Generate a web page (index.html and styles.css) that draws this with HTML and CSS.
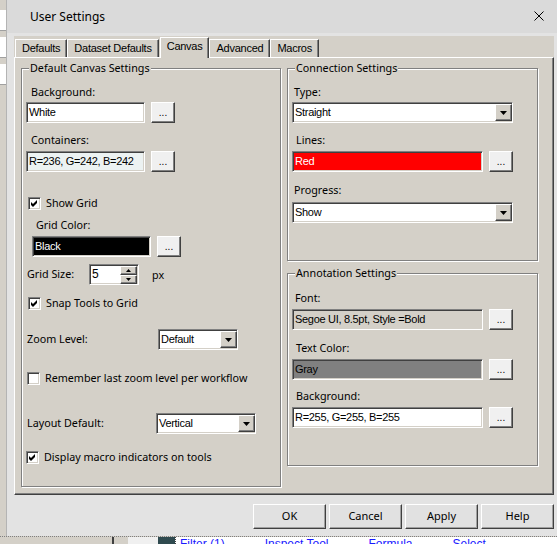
FILE: index.html
```html
<!DOCTYPE html>
<html lang="en">
<head>
  <meta charset="UTF-8" />
  <title>User Settings</title>
  <link rel="stylesheet" href="styles.css">
</head>
<body>
  <div class="desk">
    <div class="desk-left">
      <div class="slot"></div>
      <div class="slot"></div>
      <div class="slot"></div>
    </div>

    <div class="window" role="dialog" aria-label="User Settings">
      <div class="titlebar">
        <span>User Settings</span>
        <svg class="close" width="10" height="10" viewBox="0 0 10 10"><path d="M0.5 0.5L9.5 9.5M9.5 0.5L0.5 9.5" stroke="#000" stroke-width="1"/></svg>
      </div>

      <div class="win-body">
        <div class="tabctl">
          <div class="tabs">
            <div class="tab">Defaults</div>
            <div class="tab">Dataset Defaults</div>
            <div class="tab active">Canvas</div>
            <div class="tab">Advanced</div>
            <div class="tab">Macros</div>
          </div>

          <div class="panel">
            <!-- left group -->
            <div class="group group-canvas">
              <div class="group-title">Default Canvas Settings</div>

              <div class="lbl mt9 in9">Background:</div>
              <div class="row mt2 in4">
                <div class="field w-short">White</div>
                <div class="dots">...</div>
              </div>

              <div class="lbl mt10 in9">Containers:</div>
              <div class="row mt3 in4">
                <div class="field w-short tint">R=236, G=242, B=242</div>
                <div class="dots">...</div>
              </div>

              <div class="check mt24 in6">
                <span class="chk"><svg width="7" height="7" viewBox="0 0 7 7"><polygon points="0,2 2,4 6,0 6,3 2,7 0,5" fill="#000"/></svg></span>
                Show Grid
              </div>

              <div class="lbl mt7 in14">Grid Color:</div>
              <div class="row mt3 in10">
                <div class="field w-short black">Black</div>
                <div class="dots">...</div>
              </div>

              <div class="row mt7 in5">
                <span class="lbl-fixed w-grid">Grid Size:</span>
                <div class="field spin">
                  <span class="spin-val">5</span>
                  <div class="spin-btns">
                    <div class="arrow-btn"><svg width="5" height="3" viewBox="0 0 5 3"><polygon points="0,3 5,3 2.5,0" fill="#000"/></svg></div>
                    <div class="arrow-btn"><svg width="5" height="3" viewBox="0 0 5 3"><polygon points="0,0 5,0 2.5,3" fill="#000"/></svg></div>
                  </div>
                </div>
                <span class="unit">px</span>
              </div>

              <div class="check mt11 in6">
                <span class="chk"><svg width="7" height="7" viewBox="0 0 7 7"><polygon points="0,2 2,4 6,0 6,3 2,7 0,5" fill="#000"/></svg></span>
                Snap Tools to Grid
              </div>

              <div class="row mt18 in5">
                <span class="lbl-fixed w-zoom">Zoom Level:</span>
                <div class="field select w-zoomsel">
                  <span class="sel-val">Default</span>
                  <div class="drop"><svg width="7" height="4" viewBox="0 0 7 4"><polygon points="0,0 7,0 3.5,4" fill="#000"/></svg></div>
                </div>
              </div>

              <div class="check mt21 in5">
                <span class="chk"></span>
                Remember last zoom level per workflow
              </div>

              <div class="row mt27 in5">
                <span class="lbl-fixed w-layout">Layout Default:</span>
                <div class="field select w-layoutsel">
                  <span class="sel-val">Vertical</span>
                  <div class="drop"><svg width="7" height="4" viewBox="0 0 7 4"><polygon points="0,0 7,0 3.5,4" fill="#000"/></svg></div>
                </div>
              </div>

              <div class="check mt16 in4">
                <span class="chk"><svg width="7" height="7" viewBox="0 0 7 7"><polygon points="0,2 2,4 6,0 6,3 2,7 0,5" fill="#000"/></svg></span>
                Display macro indicators on tools
              </div>
            </div>

            <!-- right column -->
            <div class="col-right">
              <div class="group group-side">
                <div class="group-title">Connection Settings</div>

                <div class="lbl mt9 in6">Type:</div>
                <div class="field select w-wide mt2 in4">
                  <span class="sel-val">Straight</span>
                  <div class="drop"><svg width="7" height="4" viewBox="0 0 7 4"><polygon points="0,0 7,0 3.5,4" fill="#000"/></svg></div>
                </div>

                <div class="lbl mt10 in8">Lines:</div>
                <div class="row mt3 in4">
                  <div class="field w-long red">Red</div>
                  <div class="dots">...</div>
                </div>

                <div class="lbl mt11 in6">Progress:</div>
                <div class="field select w-wide mt4 in4">
                  <span class="sel-val">Show</span>
                  <div class="drop"><svg width="7" height="4" viewBox="0 0 7 4"><polygon points="0,0 7,0 3.5,4" fill="#000"/></svg></div>
                </div>
              </div>

              <div class="group group-side">
                <div class="group-title">Annotation Settings</div>

                <div class="lbl mt10 in7">Font:</div>
                <div class="row mt3 in4">
                  <div class="field w-long readonly">Segoe UI, 8.5pt, Style =Bold</div>
                  <div class="dots">...</div>
                </div>

                <div class="lbl mt11 in8">Text Color:</div>
                <div class="row mt3 in4">
                  <div class="field w-long gray">Gray</div>
                  <div class="dots">...</div>
                </div>

                <div class="lbl mt9 in8">Background:</div>
                <div class="row mt3 in4">
                  <div class="field w-long">R=255, G=255, B=255</div>
                  <div class="dots">...</div>
                </div>
              </div>
            </div>
          </div>
        </div>

        <div class="buttons">
          <div class="btn">OK</div>
          <div class="btn">Cancel</div>
          <div class="btn">Apply</div>
          <div class="btn">Help</div>
        </div>
      </div>
    </div>
  </div>

  <div class="desk-bottom">
    <div class="pane-a"></div>
    <div class="pane-line"></div>
    <div class="pane-b"></div>
    <div class="pane-c"></div>
    <div class="tool-icon"></div>
    <div class="tool-list">
      <span class="tool-name">Filter (1)</span>
      <span class="tool-name">Inspect Tool</span>
      <span class="tool-name">Formula</span>
      <span class="tool-name">Select</span>
    </div>
  </div>
</body>
</html>
```

FILE: styles.css
```css
* {
  box-sizing: border-box;
}
body {
  margin: 0;
  width: 557px;
  height: 544px;
  overflow: hidden;
  background: #d4d0c8;
  font-family: "Noto Sans", sans-serif;
  font-size: 10.75px;
  color: #000;
  display: flex;
  flex-direction: column;
}

/* app behind the dialog */
.desk {
  display: flex;
  height: 536px;
  flex: none;
}
.desk-left {
  width: 7px;
  flex: none;
  padding-top: 10px;
  display: flex;
  flex-direction: column;
  gap: 6px;
}
.desk-left .slot {
  height: 21px;
  background: #fff;
  border-bottom: 1px solid #a0a0a0;
}
.desk-bottom {
  height: 8px;
  flex: none;
  display: flex;
  overflow: hidden;
  border-top: 1px dotted #808080;
}
.pane-a { width: 112px; }
.pane-line { width: 2px; background: #404040; }
.pane-b { width: 14px; }
.pane-c { width: 30px; background: #f0f0f0; }
.tool-icon { width: 17px; background: #2f4a4f; }
.tool-list {
  flex: 1;
  background: #fff;
  border-left: 1px dotted #404040;
  padding-left: 4px;
  display: flex;
  gap: 40px;
  font-family: "Liberation Sans", sans-serif;
  font-size: 12px;
  line-height: 14px;
}
.tool-name { color: #1a1aff; }

/* dialog */
.window {
  width: 554px;
  flex: none;
  background: #e3e3e3;
  display: flex;
  flex-direction: column;
  box-shadow: -1px 0 #b4b4b4;
}
.titlebar {
  height: 33px;
  flex: none;
  background: #dadada;
  display: flex;
  align-items: center;
  justify-content: space-between;
  padding: 0 17px 1px 23px;
  font-size: 12px;
}
.win-body {
  padding: 3px 7px 7px;
  display: flex;
  flex-direction: column;
}
.tabctl {
  background: #d4d0c8;
}
.tabs {
  height: 21px;
  display: flex;
  align-items: flex-end;
  padding-left: 1px;
}
.tab {
  height: 18px;
  padding: 0 6px;
  border: 1px solid;
  border-color: #fff #404040 transparent #fff;
  border-bottom: none;
  box-shadow: inset -1px 0 #808080;
  font-family: "Liberation Sans", sans-serif;
  font-size: 11px;
  letter-spacing: -0.25px;
  line-height: 17px;
  background: #d4d0c8;
}
.tab.active {
  height: 21px;
  margin: 0 0 -1px 1px;
  line-height: 16px;
  position: relative;
  z-index: 1;
}
.panel {
  height: 438px;
  border: 1px solid;
  border-color: #fff #404040 #404040 #fff;
  box-shadow: inset -1px -1px #808080;
  padding: 10px 0 0 6px;
  display: flex;
  gap: 6px;
  align-items: flex-start;
}

/* group boxes */
.group {
  border: 1px solid #808080;
  box-shadow: inset 1px 1px #fff, 1px 1px #fff;
  display: flex;
  flex-direction: column;
  align-items: flex-start;
}
.group-canvas {
  width: 260px;
  height: 419px;
}
.col-right {
  display: flex;
  flex-direction: column;
  gap: 12px;
}
.group-side {
  width: 251px;
  height: 193px;
}
.group-title {
  margin: -8px 0 0 7px;
  padding: 0 1px;
  height: 15px;
  line-height: 15px;
  background: #d4d0c8;
}
.lbl {
  height: 15px;
  line-height: 15px;
}
.lbl-fixed {
  line-height: 15px;
  flex: none;
}
.w-grid { width: 62px; }
.w-zoom { width: 131px; }
.w-layout { width: 129px; }
.row {
  display: flex;
  align-items: center;
}
.unit {
  margin-left: 13px;
}

/* inputs */
.field {
  height: 21px;
  border: 1px solid;
  border-color: #808080 #fff #fff #808080;
  box-shadow: inset 1px 1px #404040, inset -1px -1px #d4d0c8;
  background: #fff;
  padding-left: 2px;
  font-family: "Liberation Sans", sans-serif;
  font-size: 11px;
  letter-spacing: -0.3px;
  line-height: 19px;
  white-space: nowrap;
  overflow: hidden;
  flex: none;
}
.w-short { width: 119px; }
.w-long { width: 191px; }
.w-wide { width: 221px; }
.w-zoomsel { width: 80px; }
.w-layoutsel { width: 100px; }
.field.tint { background: #ecf2f2; }
.field.black { background: #000; color: #fff; }
.field.red { background: #f00; color: #fff; }
.field.gray { background: #808080; }
.field.readonly { background: #d4d0c8; }

.dots {
  width: 24px;
  height: 21px;
  margin-left: 6px;
  border: 1px solid;
  border-color: #fff #404040 #404040 #fff;
  box-shadow: inset -1px -1px #808080;
  background: #f0f0f0;
  font-family: "Liberation Sans", sans-serif;
  font-size: 10px;
  line-height: 19px;
  text-align: center;
  flex: none;
}

.select {
  display: flex;
  align-items: center;
}
.sel-val {
  flex: 1;
}
.drop,
.arrow-btn {
  width: 17px;
  height: 17px;
  border: 1px solid;
  border-color: #fff #404040 #404040 #fff;
  box-shadow: inset -1px -1px #808080;
  background: #d4d0c8;
  display: flex;
  align-items: center;
  justify-content: center;
}

.spin {
  width: 50px;
  display: flex;
  align-items: center;
  padding-right: 1px;
}
.spin-val {
  flex: 1;
  font-size: 12px;
}
.spin-btns {
  display: flex;
  flex-direction: column;
}
.arrow-btn {
  height: 9px;
}

/* checkboxes */
.check {
  height: 15px;
  display: flex;
  align-items: center;
  gap: 5px;
  line-height: 15px;
}
.chk {
  width: 13px;
  height: 13px;
  flex: none;
  border: 1px solid;
  border-color: #808080 #fff #fff #808080;
  box-shadow: inset 1px 1px #404040, inset -1px -1px #d4d0c8;
  background: #fff;
  display: flex;
  align-items: center;
  justify-content: center;
}

/* dialog buttons */
.buttons {
  margin-top: 9px;
  display: flex;
  justify-content: flex-end;
  gap: 3px;
}
.btn {
  width: 73px;
  height: 25px;
  border: 1px solid;
  border-color: #fff #404040 #404040 #fff;
  box-shadow: inset -1px -1px #a0a0a0;
  background: #e1e1e1;
  text-align: center;
  font-size: 11px;
  line-height: 22px;
}

/* spacing helpers */
.mt2 { margin-top: 2px; }
.mt3 { margin-top: 3px; }
.mt4 { margin-top: 4px; }
.mt7 { margin-top: 7px; }
.mt9 { margin-top: 9px; }
.mt10 { margin-top: 10px; }
.mt11 { margin-top: 11px; }
.mt16 { margin-top: 16px; }
.mt18 { margin-top: 18px; }
.mt21 { margin-top: 21px; }
.mt24 { margin-top: 24px; }
.mt27 { margin-top: 27px; }
.in4 { margin-left: 4px; }
.in5 { margin-left: 5px; }
.in6 { margin-left: 6px; }
.in7 { margin-left: 7px; }
.in8 { margin-left: 8px; }
.in9 { margin-left: 9px; }
.in10 { margin-left: 10px; }
.in14 { margin-left: 14px; }
```
